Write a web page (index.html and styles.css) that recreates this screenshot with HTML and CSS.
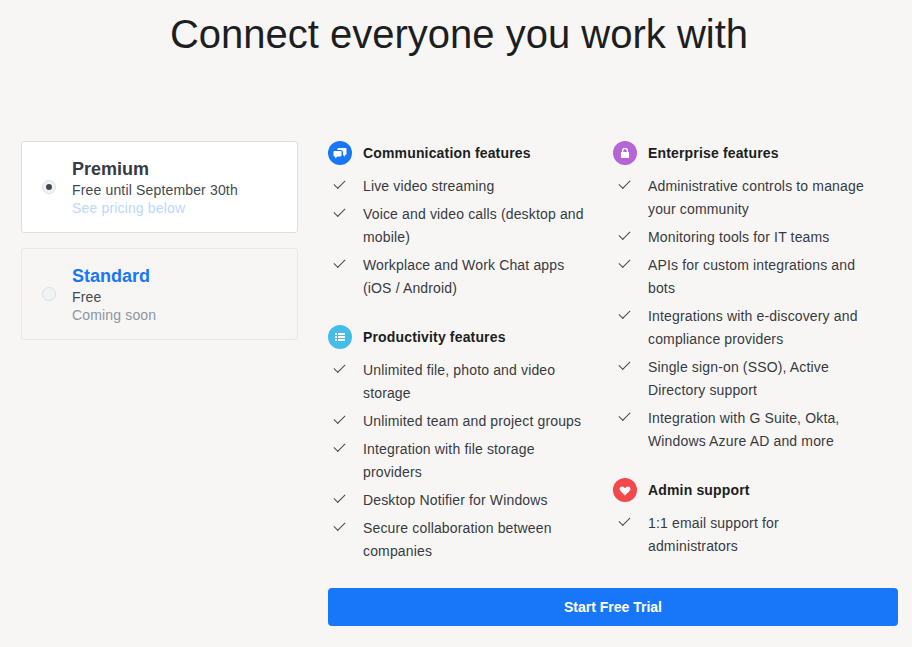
FILE: index.html
```html
<!DOCTYPE html>
<html lang="en">

<head>
    <meta charset="UTF-8">
    <meta name="viewport" content="width=device-width, initial-scale=1.0">
    <title>Connect everyone you work with</title>
    <link rel="stylesheet" href="styles.css">
</head>

<body>
    <h1 class="title">Connect everyone you work with</h1>

    <div class="wrapper">
        <div class="plans">
            <div class="plan selected">
                <span class="radio"><span class="dot"></span></span>
                <div>
                    <div class="planName">Premium</div>
                    <div class="planPrice">Free until September 30th</div>
                    <div class="planNote light">See pricing below</div>
                </div>
            </div>
            <div class="plan">
                <span class="radio"></span>
                <div>
                    <div class="planName blue">Standard</div>
                    <div class="planPrice">Free</div>
                    <div class="planNote">Coming soon</div>
                </div>
            </div>
        </div>

        <div class="details">
            <div class="columns">
                <div class="column">
                    <div class="section">
                        <div class="sectionHead">
                            <span class="icon iconBlue">
                                <svg viewBox="0 0 24 24" width="24" height="24">
                                    <path fill="#fff" d="M10.500 7h7a1 1 0 0 1 1 1v5a1 1 0 0 1-1 1h-.5v1.800L15 14v-2.500A2.500 2.500 0 0 0 12.500 9H9.500V8a1 1 0 0 1 1-1z" />
                                    <path fill="#fff" d="M6.500 10h6a1 1 0 0 1 1 1v3.500a1 1 0 0 1-1 1H9.500L7.200 17.500v-2h-.7a1 1 0 0 1-1-1V11a1 1 0 0 1 1-1z" />
                                </svg>
                            </span>
                            <h2>Communication features</h2>
                        </div>
                        <ul>
                            <li>Live video streaming</li>
                            <li>Voice and video calls (desktop and mobile)</li>
                            <li>Workplace and Work Chat apps (iOS / Android)</li>
                        </ul>
                    </div>
                    <div class="section">
                        <div class="sectionHead">
                            <span class="icon iconCyan">
                                <svg viewBox="0 0 24 24" width="24" height="24">
                                    <path fill="#fff" d="M7 8h2v2H7zM10 8h7v2h-7zM7 11h2v2H7zM10 11h7v2h-7zM7 14h2v2H7zM10 14h7v2h-7z" />
                                </svg>
                            </span>
                            <h2>Productivity features</h2>
                        </div>
                        <ul>
                            <li>Unlimited file, photo and video storage</li>
                            <li>Unlimited team and project groups</li>
                            <li>Integration with file storage providers</li>
                            <li>Desktop Notifier for Windows</li>
                            <li>Secure collaboration between companies</li>
                        </ul>
                    </div>
                </div>

                <div class="column">
                    <div class="section">
                        <div class="sectionHead">
                            <span class="icon iconPurple">
                                <svg viewBox="0 0 24 24" width="24" height="24">
                                    <path fill="#fff" fill-rule="evenodd" d="M9 11V9.800a3 3 0 0 1 6 0V11h.300a.8.8 0 0 1 .8.800v4.400a.8.8 0 0 1-.8.800H8.700a.8.8 0 0 1-.8-.8v-4.400a.8.800 0 0 1 .8-.8zm1.300 0h3.400V9.800a1.700 1.700 0 0 0-3.400 0z" />
                                </svg>
                            </span>
                            <h2>Enterprise features</h2>
                        </div>
                        <ul>
                            <li>Administrative controls to manage your community</li>
                            <li>Monitoring tools for IT teams</li>
                            <li>APIs for custom integrations and bots</li>
                            <li>Integrations with e-discovery and compliance providers</li>
                            <li>Single sign-on (SSO), Active Directory support</li>
                            <li>Integration with G Suite, Okta, Windows Azure AD and more</li>
                        </ul>
                    </div>
                    <div class="section">
                        <div class="sectionHead">
                            <span class="icon iconRed">
                                <svg viewBox="0 0 24 24" width="24" height="24">
                                    <path fill="#fff" d="M12 17.500l-4.300-4.200C6.300 11.900 6.300 10.100 7.400 9.100c1.200-1 2.900-.8 3.800.3l.8.900.8-.9c.9-1.100 2.600-1.300 3.800-.3 1.100 1 1.100 2.800-.3 4.200z" />
                                </svg>
                            </span>
                            <h2>Admin support</h2>
                        </div>
                        <ul>
                            <li>1:1 email support for administrators</li>
                        </ul>
                    </div>
                </div>
            </div>
            <button class="trial">Start Free Trial</button>
        </div>
    </div>
</body>

</html>
```

FILE: styles.css
```css
body {
    margin: 0;
    background-color: #f7f6f5;
    font-family: "Liberation Sans", Arial, sans-serif;
    color: #1c1e21;
}

.title {
    margin: 0;
    padding-top: 11px;
    padding-left: 6px;
    height: 130px;
    box-sizing: border-box;
    font-size: 40px;
    line-height: 46px;
    font-weight: 400;
    text-align: center;
}

.wrapper {
    display: flex;
    align-items: flex-start;
    padding: 11px 14px 0 21px;
}

.plans {
    width: 277px;
    margin-right: 30px;
    flex-shrink: 0;
}

.plan {
    display: flex;
    align-items: center;
    height: 92px;
    box-sizing: border-box;
    border: 1px solid #e9e8e7;
    border-radius: 3px;
    margin-bottom: 15px;
    padding-left: 20px;
}

.plan.selected {
    background-color: #fff;
    border-color: #dddfe2;
}

.radio {
    width: 14px;
    height: 14px;
    box-sizing: border-box;
    border: 1px solid #dddfe2;
    border-radius: 50%;
    background-color: #f2f3f5;
    margin-right: 16px;
    display: flex;
    justify-content: center;
    align-items: center;
}

.dot {
    width: 6px;
    height: 6px;
    border-radius: 50%;
    background-color: #444950;
}

.planName {
    font-size: 18px;
    line-height: 24px;
    font-weight: 700;
    color: #373b41;
}

.planName.blue {
    color: #1877f8;
}

.planPrice,
.planNote {
    font-size: 14px;
    line-height: 18px;
    color: #444950;
    letter-spacing: 0.16px;
}

.planNote {
    color: #8d949e;
}

.planNote.light {
    color: #bbd8fb;
}

.details {
    width: 570px;
}

.columns {
    display: flex;
}

.column {
    width: 285px;
    padding-right: 28px;
    box-sizing: border-box;
}

.section {
    margin-bottom: 25px;
}

.section:last-child {
    margin-bottom: 0;
}

.sectionHead {
    display: flex;
    align-items: center;
    height: 24px;
    margin-bottom: 10px;
}

.icon {
    width: 24px;
    height: 24px;
    border-radius: 50%;
    margin-right: 11px;
    flex-shrink: 0;
}

.icon svg {
    display: block;
}

.iconBlue {
    background-color: #1877f8;
}

.iconCyan {
    background-color: #45bde9;
}

.iconPurple {
    background-color: #b565d6;
}

.iconRed {
    background-color: #f5484a;
}

.sectionHead h2 {
    margin: 0;
    font-size: 14px;
    line-height: 24px;
    font-weight: 700;
    letter-spacing: 0.16px;
}

ul {
    list-style: none;
    margin: 0;
    padding: 0;
}

li {
    position: relative;
    padding-left: 35px;
    margin-bottom: 5px;
    font-size: 14px;
    line-height: 23px;
    letter-spacing: 0.15px;
    color: #373b41;
}

li::before {
    content: "";
    position: absolute;
    left: 6px;
    top: 5px;
    width: 10px;
    height: 5px;
    border-left: 1.7px solid #444950;
    border-bottom: 1.7px solid #444950;
    transform: rotate(-45deg);
}

.trial {
    display: block;
    width: 100%;
    height: 38px;
    margin-top: 20px;
    border: none;
    border-radius: 4px;
    background-color: #1877f8;
    color: #fff;
    font-family: inherit;
    font-size: 14px;
    font-weight: 700;
}
```
